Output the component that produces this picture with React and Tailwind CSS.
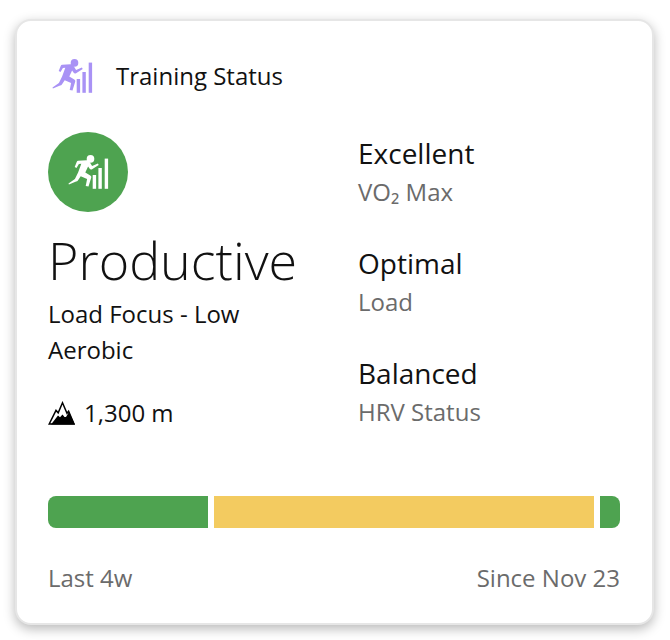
import React from "react";

function RunBars({ className }) {
  return (
    <svg viewBox="0 0 40 34" className={className} fill="currentColor">
      <circle cx="22" cy="3.9" r="3.8" />
      <path d="M9.6 5.8 L18 5.2 C19.6 5.1 20.4 5.8 21 6.8 L23.6 11 L29.4 8.6 L30.2 10 L23.6 14.2 C22.6 14.8 21.8 14.6 21.2 13.8 L19.6 11.6 L16.8 17.4 L21.8 20.6 C22.7 21.2 22.9 21.8 22.7 22.8 L20 31.6 L17.2 31 L18.6 24 L12.2 21.2 L9.4 25.4 C9 26 8.4 26.3 7.6 26.6 L0.4 29.4 L0 28.6 L6.4 24 L9.6 17.4 L12.8 8.8 L10.4 8.9 L8 13 L6.2 12 L8.2 7 C8.5 6.2 9 5.9 9.6 5.8 Z" />
      <rect x="24.2" y="20" width="3.4" height="13.8" />
      <rect x="29.9" y="13" width="3.4" height="20.8" />
      <rect x="36.2" y="3.6" width="3.4" height="30.2" />
    </svg>
  );
}

function Mountain() {
  return (
    <svg viewBox="0 0 27 24" className="w-[27px] h-[24px] text-black" fill="currentColor">
      <path d="M1.2 23 L8 9.4 L10.2 11.8 L14.5 1.8 L19 12.2 L20.6 10.2 L26 23 Z" fill="white" stroke="currentColor" strokeWidth="1.5" strokeLinejoin="miter" />
      <path d="M3 23.6 L10 14.5 L12 16.2 L14.5 13.5 L16.5 16 L18 16 L21 11 L27 23.6 Z" />
    </svg>
  );
}

function Stat({ value, label }) {
  return (
    <div className="flex flex-col h-[110px] shrink-0">
      <div className="text-[28px] leading-[38px] text-[#111111] h-[38px]">{value}</div>
      <div className="text-[24px] leading-[38px] mt-[1px] text-[#6b6b6b]">{label}</div>
    </div>
  );
}

export default function App() {
  return (
    <div
      className="w-[670px] h-[640px] bg-white pt-[19px] pl-[15px] text-[#111111]"
      style={{ fontFamily: '"Open Sans", sans-serif' }}
    >
      <div className="w-[639px] h-[606px] rounded-[16px] bg-white border-2 border-[#e6e6e6] shadow-[0_4px_12px_rgba(0,0,0,0.28)] pt-[37px] pl-[31px] pr-[32px]">
        <div className="flex items-center h-[36px]">
          <RunBars className="w-[41px] h-[34px] ml-[4px] text-[#a992f5]" />
          <span className="ml-[23px] text-[24px] leading-[36px]">Training Status</span>
        </div>
        <div className="flex mt-[38px] h-[346px]">
          <div className="w-[310px] flex flex-col shrink-0">
            <div className="w-[80px] h-[80px] rounded-full bg-[#4ea350] flex items-center justify-center text-white">
              <RunBars className="w-[41px] h-[34px]" />
            </div>
            <div className="text-[52px] leading-[68px] font-light mt-[14px]">Productive</div>
            <div className="text-[24px] leading-[36px] mt-[2px] w-[250px]">Load Focus - Low Aerobic</div>
            <div className="flex items-center mt-[27px] h-[36px]">
              <Mountain />
              <span className="ml-[9px] text-[24px] leading-[36px]">1,300 m</span>
            </div>
          </div>
          <div className="flex flex-col pt-[2px]">
            <Stat value="Excellent" label="VO₂ Max" />
            <Stat value="Optimal" label="Load" />
            <Stat value="Balanced" label="HRV Status" />
          </div>
        </div>
        <div className="flex h-[32px] mt-[18px] gap-[6px] w-[572px]">
          <div className="w-[160px] bg-[#4ea350] rounded-l-[8px]" />
          <div className="w-[380px] bg-[#f3cb60]" />
          <div className="flex-1 bg-[#4ea350] rounded-r-[8px]" />
        </div>
        <div className="flex justify-between w-[572px] mt-[32px] text-[24px] leading-[36px] text-[#6b6b6b]">
          <span>Last 4w</span>
          <span>Since Nov 23</span>
        </div>
      </div>
    </div>
  );
}
